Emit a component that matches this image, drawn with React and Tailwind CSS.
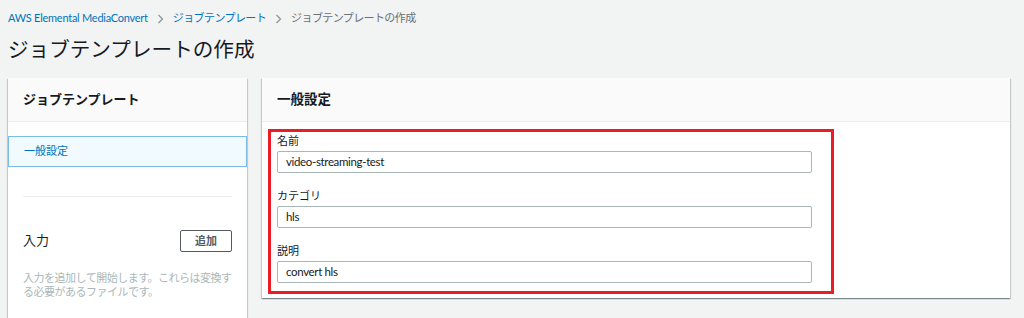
import React from "react";

const font = { fontFamily: 'Lato, "Noto Sans CJK JP", sans-serif' };

const panelShadow =
  "shadow-[0_1px_1px_0_rgba(0,28,36,0.3),1px_1px_1px_0_rgba(0,28,36,0.15),-1px_1px_1px_0_rgba(0,28,36,0.15)]";

const Chevron = () => (
  <span className="mx-[8px] text-[#879596]">
    <svg width="9" height="10" viewBox="0 0 9 10" fill="none" stroke="currentColor" strokeWidth="1.2">
      <path d="M2.5 1l4 4-4 4" />
    </svg>
  </span>
);

const Field = ({ label, value }) => (
  <div className="flex flex-col">
    <label className="text-[11px] leading-[17px] text-[#16191f]">{label}</label>
    <div className="mt-[2px] h-[22px] w-[535px] rounded-[2px] border border-[#aab7b8] bg-white px-[8px] text-[11.5px] leading-[20px] tracking-[-0.35px] text-[#16191f]">
      {value}
    </div>
  </div>
);

const App = () => {
  return (
    <div className="h-[318px] overflow-hidden bg-[#f2f3f3] pl-[8px] pr-[14px]" style={font}>
      {/* breadcrumb */}
      <div className="flex h-[36px] items-center pt-[1px] text-[11px]">
        <span className="tracking-[-0.25px] text-[#0073bb]">AWS Elemental MediaConvert</span>
        <Chevron />
        <span className="tracking-[-0.6px] text-[#0073bb]">ジョブテンプレート</span>
        <Chevron />
        <span className="tracking-[-0.6px] text-[#687078]">ジョブテンプレートの作成</span>
      </div>

      {/* title */}
      <h1 className="h-[42px] text-[20.6px] leading-[26px] font-normal text-[#16191f]">
        ジョブテンプレートの作成
      </h1>

      <div className="flex gap-[15px]">
        {/* left panel */}
        <div className={`w-[239px] h-[260px] bg-white ${panelShadow}`}>
          <div className="flex h-[44px] items-center border-b border-[#eaeded] bg-[#fafafa] px-[15px] text-[13px] font-bold text-[#16191f]">
            ジョブテンプレート
          </div>
          <div className="pt-[14px]">
            <div className="flex h-[31px] items-center border border-[#79bde5] bg-[#f1faff] px-[15px] text-[11px] text-[#0073bb]">
              一般設定
            </div>
          </div>
          <div className="mx-[15px] mt-[29px] border-t border-[#eaeded]" />
          <div className="mx-[15px] mt-[33px] flex items-center justify-between">
            <span className="text-[13px] text-[#16191f]">入力</span>
            <button className="h-[22px] w-[52px] rounded-[2px] border border-[#545b64] bg-white text-[11px] font-bold text-[#545b64]">
              追加
            </button>
          </div>
          <p className="ml-[15px] mr-[12px] mt-[19px] text-[11px] leading-[14px] tracking-[-0.5px] text-[#aab7b8]">
            入力を追加して開始します。これらは変換する必要があるファイルです。
          </p>
        </div>

        {/* right panel */}
        <div className={`flex-1 h-[220px] bg-white ${panelShadow}`}>
          <div className="flex h-[44px] items-center border-b border-[#eaeded] bg-[#fafafa] px-[15px] text-[13.5px] font-bold text-[#16191f]">
            一般設定
          </div>
          <div className="pl-[6px] pt-[7px]">
            <div className="flex w-[566px] flex-col gap-[14px] border-[3px] border-[#ec1c24] pb-[8px] pl-[6px]">
              <Field label="名前" value="video-streaming-test" />
              <Field label="カテゴリ" value="hls" />
              <Field label="説明" value="convert hls" />
            </div>
          </div>
        </div>
      </div>
    </div>
  );
};

export default App;
